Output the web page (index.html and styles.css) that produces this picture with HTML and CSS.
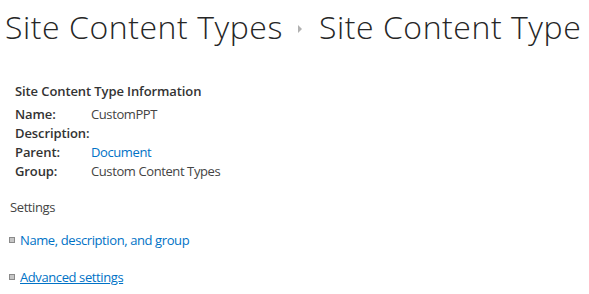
FILE: index.html
```html
<!DOCTYPE html>
<html lang="en">

<head>
  <meta charset="UTF-8">
  <title>Site Content Type</title>
  <link rel="stylesheet" href="styles.css">
</head>

<body>
  <h1 id="page-title">
    <span>Site Content Types</span>
    <span class="crumb-arrow"></span>
    <span>Site Content Type</span>
  </h1>

  <div id="info">
    <h3>Site Content Type Information</h3>
    <table>
      <tr>
        <td class="label">Name:</td>
        <td>CustomPPT</td>
      </tr>
      <tr>
        <td class="label">Description:</td>
        <td></td>
      </tr>
      <tr>
        <td class="label">Parent:</td>
        <td><a href="#">Document</a></td>
      </tr>
      <tr>
        <td class="label">Group:</td>
        <td>Custom Content Types</td>
      </tr>
    </table>
  </div>

  <div id="settings">
    <h3>Settings</h3>
    <ul>
      <li><a href="#">Name, description, and group</a></li>
      <li><a href="#" class="underlined">Advanced settings</a></li>
    </ul>
  </div>
</body>

</html>
```

FILE: styles.css
```css
body {
  margin: 0;
  font-family: "Open Sans", "Noto Sans", sans-serif;
  font-size: 13px;
  letter-spacing: -0.4px;
  color: #444;
}

#page-title {
  margin: 0;
  padding: 5px 0 0 5px;
  font-size: 32px;
  font-weight: 300;
  color: #262626;
  white-space: nowrap;
  display: flex;
  align-items: center;
  gap: 15px;
  letter-spacing: 0.55px;
}

.crumb-arrow {
  width: 0;
  height: 0;
  border-top: 4px solid transparent;
  border-bottom: 4px solid transparent;
  border-left: 4px solid #b1b1b1;
  margin: 4px 2px 0 0;
}

#info {
  padding: 34px 0 0 15px;
}

#info h3 {
  margin: 0 0 4px 0;
  font-size: 13px;
  font-weight: 600;
  letter-spacing: -0.1px;
  color: #333;
}

#info table {
  border-collapse: collapse;
}

#info td {
  padding: 0;
  height: 19px;
  vertical-align: middle;
}

#info td.label {
  width: 76px;
  font-weight: 600;
  letter-spacing: -0.1px;
  color: #333;
}

a {
  color: #0072c6;
  text-decoration: none;
}

a.underlined {
  text-decoration: underline;
}

#settings {
  padding: 18px 0 0 10px;
}

#settings h3 {
  margin: 0;
  font-size: 13px;
  font-weight: 400;
  color: #444;
}

#settings ul {
  list-style: none;
  margin: 14px 0 0 0;
  padding: 0;
}

#settings li {
  display: flex;
  align-items: center;
  gap: 5px;
  height: 19px;
  margin-bottom: 18px;
  margin-left: -1px;
}

#settings li::before {
  content: "";
  width: 4px;
  height: 4px;
  border: 1px solid #8a8a8a;
  background: #c6c6c6;
}
```
